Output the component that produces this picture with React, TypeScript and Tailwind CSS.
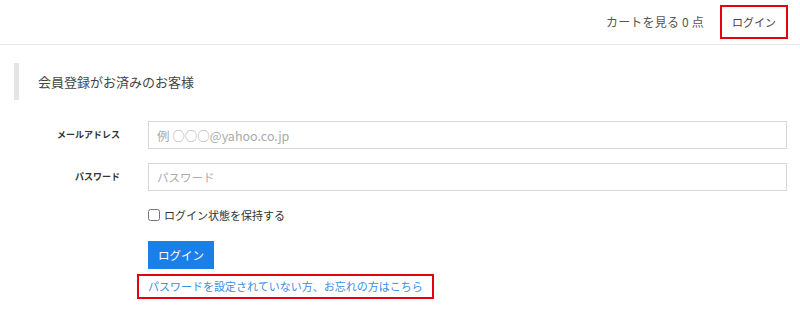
const font = { fontFamily: '"Noto Sans CJK JP", "Liberation Sans", sans-serif' }

export default function App() {
  return (
    <div className="w-[800px] h-[309px] bg-white text-[#333] overflow-hidden" style={font}>
      <header className="h-[45px] border-b border-[#e8e8e8] flex items-center justify-end pr-[12px]">
        <span className="text-[12px] text-[#555] mr-[16px] tracking-[0.2px]">カートを見る 0 点</span>
        <button className="h-[34px] w-[68px] border-2 border-[#e60012] text-[11px] text-[#444]">
          ログイン
        </button>
      </header>

      <div className="mt-[18px] ml-[14px] border-l-[5px] border-[#e5e5e5] h-[37px] flex items-center pl-[19px]">
        <h2 className="text-[13px] text-[#444]">会員登録がお済みのお客様</h2>
      </div>

      <form className="mt-[21px] pr-[13px]">
        <div className="flex items-center">
          <label className="w-[148px] pr-[28px] text-right text-[9px] font-bold text-[#333]">
            メールアドレス
          </label>
          <input
            className="flex-1 h-[28px] border border-[#d6d6d6] px-[8px] text-[12.5px] placeholder:text-[#aaa] outline-none"
            placeholder="例 ○○○@yahoo.co.jp"
          />
        </div>
        <div className="flex items-center mt-[14px]">
          <label className="w-[148px] pr-[28px] text-right text-[9px] font-bold text-[#333]">
            パスワード
          </label>
          <input
            type="text"
            className="flex-1 h-[28px] border border-[#d6d6d6] px-[8px] text-[11.5px] placeholder:text-[#aaa] outline-none"
            placeholder="パスワード"
          />
        </div>
        <div className="ml-[148px] mt-[16px] flex items-center">
          <input type="checkbox" className="w-[12px] h-[12px] m-0 mr-[4px]" />
          <span className="text-[11px] text-[#333]">ログイン状態を保持する</span>
        </div>
        <div className="ml-[148px] mt-[17px]">
          <button type="button" className="h-[28px] w-[66px] bg-[#1a7fe8] text-white text-[11.5px]">
            ログイン
          </button>
        </div>
        <div className="ml-[137px] mt-[5px] w-[297px] h-[25px] border-2 border-[#e60012] flex items-center pl-[9px]">
          <a className="text-[11px] text-[#3a8ee6] whitespace-nowrap">パスワードを設定されていない方、お忘れの方はこちら</a>
        </div>
      </form>
    </div>
  )
}
